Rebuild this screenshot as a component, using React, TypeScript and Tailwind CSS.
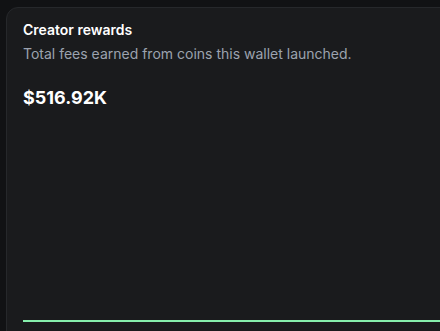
const App = () => {
  return (
    <div className="w-[440px] h-[331px] overflow-hidden bg-[#111214] pl-[6px] pt-[7px] font-['Inter',sans-serif]">
      <div className="w-[460px] h-[360px] flex flex-col rounded-xl border border-[#26282b] bg-[#1a1b1d] px-4 pt-3">
        <h2 className="text-sm font-semibold leading-5 text-white">Creator rewards</h2>
        <p className="mt-1 text-sm leading-5 text-[#9ca3af]">
          Total fees earned from coins this wallet launched.
        </p>
        <div className="mt-5 text-lg font-bold leading-7 text-white">$516.92K</div>
        <div className="flex-1 flex flex-col justify-start">
          <div className="mt-[208px] h-[2px] w-full bg-[#86efac]" />
        </div>
      </div>
    </div>
  );
};

export default App;
